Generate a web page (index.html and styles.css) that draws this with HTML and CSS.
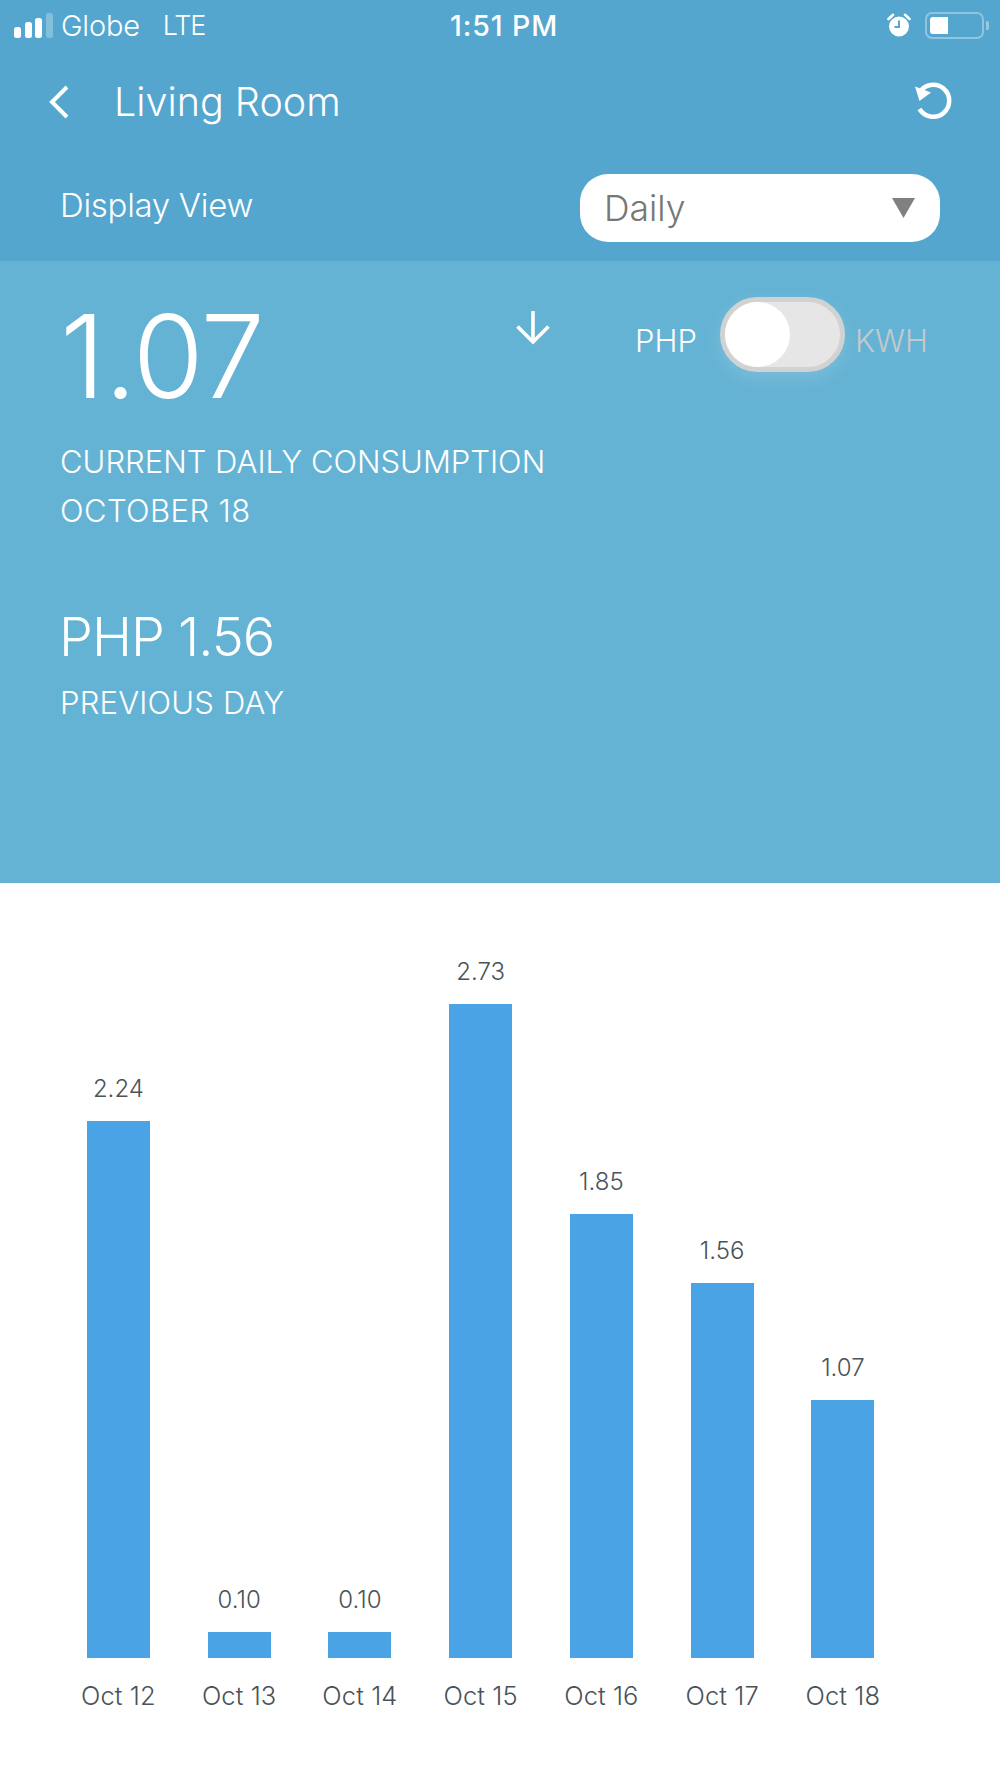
FILE: index.html
```html
<!DOCTYPE html>
<html lang="en">
<head>
<meta charset="utf-8">
<title>Living Room</title>
<link rel="stylesheet" href="styles.css">
</head>
<body>
<header class="top">
  <div class="status">
    <div class="status-left">
      <svg class="signal" width="39" height="25" viewBox="0 0 39 25"><rect x="0" y="14" width="7" height="11" rx="2.5" fill="#fff"/><rect x="11" y="9" width="7" height="16" rx="2.5" fill="#fff"/><rect x="21" y="5" width="7" height="20" rx="2.5" fill="#fff"/><rect x="32" y="0" width="7" height="25" rx="2.5" fill="#fff" opacity=".28"/></svg>
      <span class="carrier">Globe</span>
      <span class="net">LTE</span>
    </div>
    <div class="clock">1:51 PM</div>
    <div class="status-right">
      <svg width="24" height="24" viewBox="0 0 24 24"><circle cx="12" cy="13.5" r="10" fill="#fff"/><path d="M12 7.5v6.5H7.5" fill="none" stroke="#54a6ce" stroke-width="2"/><path d="M1.500 6 6 1.800M22.500 6 18 1.800" stroke="#fff" stroke-width="2.600" stroke-linecap="round"/></svg>
      <div class="battery"><div class="battery-fill"></div></div>
      <div class="battery-cap"></div>
    </div>
  </div>
  <div class="title-row">
    <svg class="back" width="22" height="34" viewBox="0 0 22 34"><path d="M19 2 4 17l15 15" fill="none" stroke="#fff" stroke-width="4"/></svg>
    <h1 class="title">Living Room</h1>
    <svg class="refresh" width="40" height="40" viewBox="0 0 40 40"><path d="M6.500 11.500A16 16 0 1 1 6.500 28" fill="none" stroke="#fff" stroke-width="4.500"/><path d="M2 5.500 18 11.500 6.500 20Z" fill="#fff"/></svg>
  </div>
  <div class="view-row">
    <span class="view-label">Display View</span>
    <div class="select"><span>Daily</span><svg width="23" height="20" viewBox="0 0 23 20"><path d="M0 0h23L11.500 20Z" fill="#808080"/></svg></div>
  </div>
</header>
<section class="panel">
  <div class="panel-main">
    <div class="big">1.07</div>
    <div class="caption first">CURRENT DAILY CONSUMPTION</div>
    <div class="caption date">OCTOBER 18</div>
    <div class="mid">PHP 1.56</div>
    <div class="caption prev">PREVIOUS DAY</div>
  </div>
  <svg class="arrow" width="36" height="36" viewBox="0 0 36 36"><path d="M18 1v31M2.500 16.500 18 32l15.500-15.500" fill="none" stroke="#fff" stroke-width="3.600"/></svg>
  <div class="unit">
    <span class="unit-on">PHP</span>
    <div class="switch"><div class="knob"></div></div>
    <span class="unit-off">KWH</span>
  </div>
</section>
<main class="chart">
  <div class="col"><span class="val">2.24</span><div class="bar" style="height:537px"></div><span class="day">Oct 12</span></div>
  <div class="col"><span class="val">0.10</span><div class="bar" style="height:26px"></div><span class="day">Oct 13</span></div>
  <div class="col"><span class="val">0.10</span><div class="bar" style="height:26px"></div><span class="day">Oct 14</span></div>
  <div class="col"><span class="val">2.73</span><div class="bar" style="height:654px"></div><span class="day">Oct 15</span></div>
  <div class="col"><span class="val">1.85</span><div class="bar" style="height:444px"></div><span class="day">Oct 16</span></div>
  <div class="col"><span class="val">1.56</span><div class="bar" style="height:375px"></div><span class="day">Oct 17</span></div>
  <div class="col"><span class="val">1.07</span><div class="bar" style="height:258px"></div><span class="day">Oct 18</span></div>
</main>
</body>
</html>
```
FILE: styles.css
```css
* { box-sizing: border-box; }
html, body { margin: 0; padding: 0; }
body {
  width: 1000px;
  height: 1778px;
  overflow: hidden;
  background: #fff;
  color: #fff;
  font-family: Inter, "Liberation Sans", sans-serif;
}
.top { height: 261px; background: #54a6ce; display: flex; flex-direction: column; }
.status { height: 50px; display: grid; grid-template-columns: 1fr auto 1fr; align-items: center; padding: 0 11px 0 14px; }
.status-left { display: flex; align-items: center; }
.signal { margin-right: 8px; }
.carrier { font-size: 29px; font-weight: 300; letter-spacing: -.2px; }
.net { font-size: 27px; font-weight: 300; letter-spacing: -1.2px; margin-left: 23px; }
.clock { font-size: 28.500px; font-weight: 500; letter-spacing: .9px; margin-left: 5px; }
.status-right { display: flex; align-items: center; justify-content: flex-end; }
.battery { width: 59px; height: 27px; border: 2px solid rgba(255,255,255,.35); border-radius: 7px; padding: 3px; margin-left: 14px; }
.battery-fill { width: 37%; height: 100%; background: #fff; border-radius: 3px 0 0 3px; }
.battery-cap { width: 3px; height: 9px; background: rgba(255,255,255,.4); border-radius: 0 2px 2px 0; margin-left: 2px; }
.title-row { height: 54px; display: flex; align-items: center; padding: 0 47px 0 48px; margin-top: 25px; }
.title { margin: 0 0 0 44px; flex: 1; font-size: 39.500px; font-weight: 300; line-height: 54px; }
.back { display: block; }
.refresh { display: block; margin-top: -3px; }
.view-row { margin-top: 45px; display: flex; align-items: center; justify-content: space-between; padding: 0 60px; }
.view-label { font-size: 33px; font-weight: 300; letter-spacing: -.3px; margin-top: -6px; }
.select { width: 360px; height: 68px; background: #fff; border-radius: 28px; color: #777; font-size: 35.500px; font-weight: 300; display: flex; align-items: center; justify-content: space-between; padding: 0 25px 0 24px; }
.panel { height: 622px; background: #65b3d4; display: flex; align-items: flex-start; padding: 0 0 0 60px; }
.panel-main { width: 455px; padding-top: 33px; }
.big { font-size: 115px; font-weight: 300; line-height: 126px; letter-spacing: -1px; white-space: nowrap; }
.caption { font-size: 31px; font-weight: 300; line-height: 49px; white-space: nowrap; }
.caption.first { margin-top: 16.500px; }
.caption.date { letter-spacing: .4px; }
.mid { font-size: 54px; font-weight: 300; line-height: 60px; margin-top: 72px; margin-left: -1px; letter-spacing: -1px; white-space: nowrap; }
.caption.prev { margin-top: 11px; letter-spacing: .2px; }
.arrow { margin-top: 49px; flex: none; }
.unit { display: flex; align-items: flex-start; margin-left: 84px; margin-top: 36px; }
.unit-on, .unit-off { font-size: 31px; font-weight: 300; line-height: 38px; margin-top: 25px; }
.unit-off { color: #c4c9cc; margin-left: 10px; }
.switch { width: 125px; height: 75px; margin-left: 23px; border: 5px solid #d2d2d2; border-radius: 38px; background: #e6e6e6; box-shadow: 0 6px 16px rgba(255,255,255,.14); }
.knob { width: 65px; height: 65px; border-radius: 50%; background: #fff; }
.chart { height: 895px; display: grid; grid-template-columns: repeat(7, 120.750px); padding-left: 58px; }
.col { display: flex; flex-direction: column; align-items: center; justify-content: flex-end; padding-bottom: 67px; }
.val { font-size: 24px; font-weight: 350; line-height: 30px; color: #4a5357; margin-bottom: 17px; }
.bar { width: 63px; background: #4aa3e5; flex: none; }
.day { font-size: 25.500px; font-weight: 350; line-height: 30px; margin-top: 23px; color: #4a5357; letter-spacing: .1px; }
```
